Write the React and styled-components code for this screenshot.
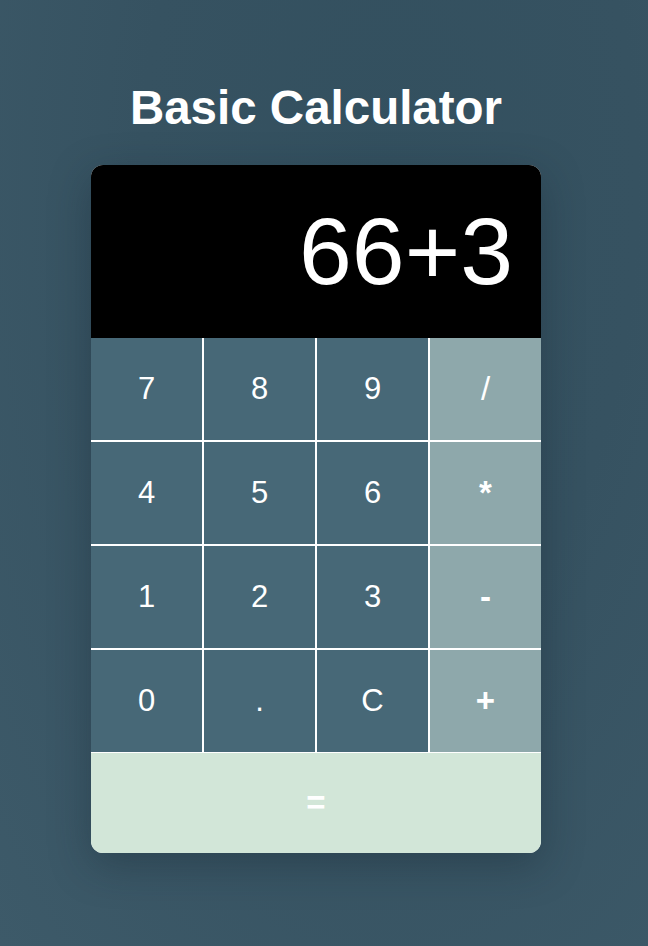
import React from 'react'
import styled, { createGlobalStyle } from 'styled-components'

const GlobalStyle = createGlobalStyle`
  html, body {
    margin: 0;
    padding: 0;
  }
  body {
    min-height: 100vh;
    background: radial-gradient(ellipse at 60% 20%, #33505f 0%, #365261 45%, #3d5a69 100%);
    font-family: "Liberation Sans", Arial, Helvetica, sans-serif;
  }
`

const Page = styled.div`
  display: flex;
  flex-direction: column;
  align-items: center;
  padding: 82px 16px 60px 0;
`

const Title = styled.h1`
  margin: 0 0 31px;
  color: #ffffff;
  font-size: 47.5px;
  line-height: 52px;
  font-weight: 700;
`

const Card = styled.div`
  width: 450px;
  display: flex;
  flex-direction: column;
  background: #ffffff;
  border-radius: 12px;
  overflow: hidden;
  box-shadow: 0 12px 40px rgba(20, 35, 45, 0.35);
`

const Display = styled.div`
  height: 173px;
  display: flex;
  align-items: center;
  justify-content: flex-end;
  padding-right: 28px;
  background: #000000;
  color: #ffffff;
  font-size: 95px;
  line-height: 1;
`

const Keypad = styled.div`
  display: grid;
  grid-template-columns: repeat(4, 1fr);
  grid-auto-rows: 102px;
  gap: 2px;
`

const Key = styled.button`
  border: none;
  padding: 0;
  display: flex;
  align-items: center;
  justify-content: center;
  background: ${(p) => (p.$op ? '#8ea8ab' : '#476877')};
  color: #ffffff;
  font-family: inherit;
  font-size: ${(p) => (p.$op ? '33px' : '31px')};
  font-weight: ${(p) => (p.$bold ? 700 : 400)};
  cursor: pointer;
`

const Equals = styled.button`
  border: none;
  margin-top: 1px;
  height: 100px;
  padding: 0;
  background: #d2e6d8;
  color: #ffffff;
  font-family: inherit;
  font-size: 33px;
  font-weight: 700;
  cursor: pointer;
`

const keys = [
  { label: '7' }, { label: '8' }, { label: '9' }, { label: '/', op: true },
  { label: '4' }, { label: '5' }, { label: '6' }, { label: '*', op: true, bold: true },
  { label: '1' }, { label: '2' }, { label: '3' }, { label: '-', op: true, bold: true },
  { label: '0' }, { label: '.' }, { label: 'C' }, { label: '+', op: true, bold: true },
]

export default function App() {
  return (
    <>
      <GlobalStyle />
      <Page>
        <Title>Basic Calculator</Title>
        <Card>
          <Display>66+3</Display>
          <Keypad>
            {keys.map((k) => (
              <Key key={k.label} $op={k.op} $bold={k.bold}>
                {k.label}
              </Key>
            ))}
          </Keypad>
          <Equals>=</Equals>
        </Card>
      </Page>
    </>
  )
}
